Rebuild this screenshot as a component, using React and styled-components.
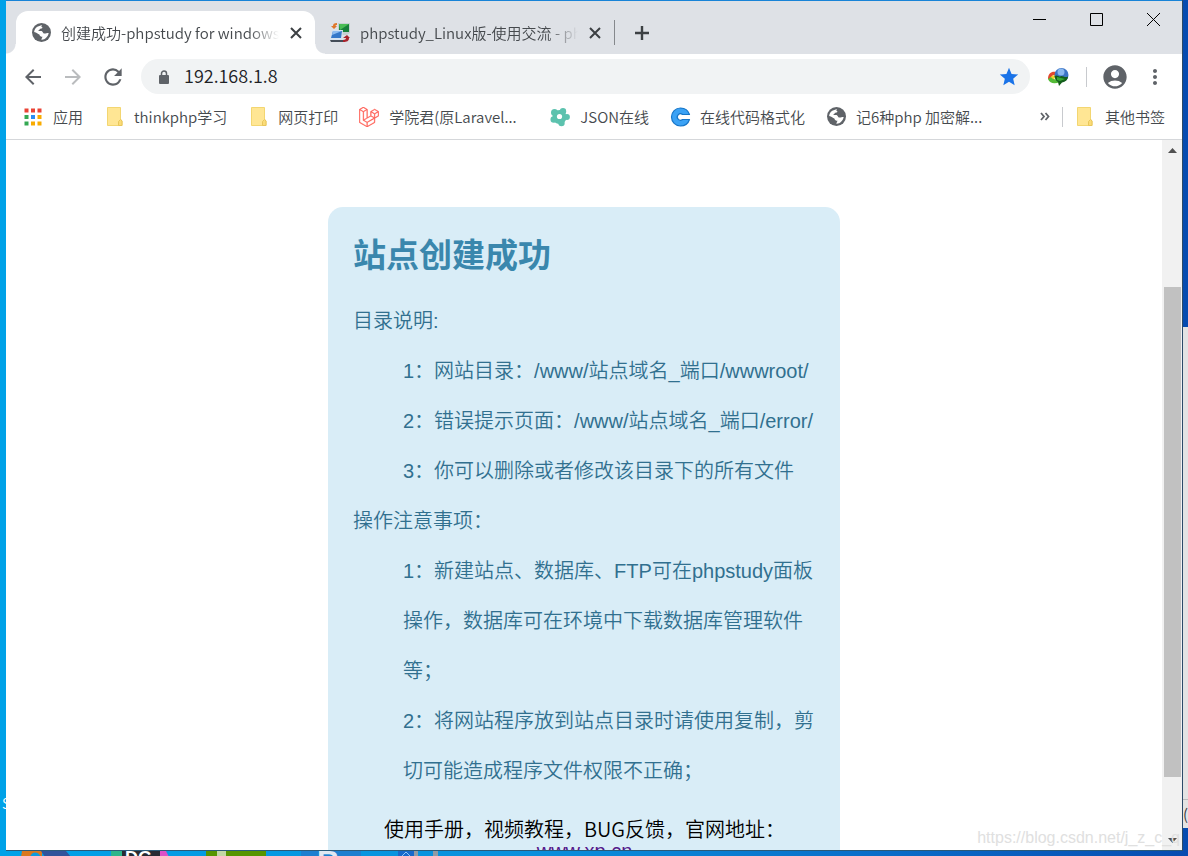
import React from 'react'
import styled, { createGlobalStyle, css } from 'styled-components'
import {
  MdArrowBack,
  MdArrowForward,
  MdMoreVert,
  MdRefresh,
  MdStar,
  MdAccountCircle,
} from 'react-icons/md'
import { SiLaravel } from 'react-icons/si'

const uiFont = "'Noto Sans CJK SC', sans-serif"
const pageFont = "'Liberation Sans', 'Noto Sans CJK SC', sans-serif"

const GlobalStyle = createGlobalStyle`
  * {
    box-sizing: border-box;
  }
  body {
    margin: 0;
    font-family: ${uiFont};
    font-weight: 350;
  }
  button {
    border: 0;
    padding: 0;
    background: none;
    font: inherit;
  }
  svg {
    display: block;
    flex: none;
  }
`

const Desktop = styled.div`
  position: relative;
  display: grid;
  grid-template-columns: 6px minmax(0, 1fr) 6px;
  grid-template-rows: minmax(0, 1fr) 5px;
  height: 100vh;
  overflow: hidden;
  background: linear-gradient(90deg, #00a2e8 0%, #0a8fdc 45%, #0a6cc8 75%, #064bb0 100%);
`

const LeftEdge = styled.div`
  display: flex;
  align-items: flex-end;
  padding: 0 0 38px 2px;
  overflow: hidden;
  color: #fff;
  font-size: 14px;
  line-height: 20px;
`

const RightEdge = styled.div`
  display: flex;
  flex-direction: column;
  border-left: 1px solid #2b4a68;
`

const EdgeWindow = styled.div`
  display: flex;
  flex-direction: column;
  justify-content: flex-end;
  flex: 500;
  overflow: hidden;
  background: #e3e3e3;
  color: #333;
  font-size: 15px;
  line-height: 28px;

  span {
    border-top: 1px solid #bbb;
  }
`

const EdgeSpace = styled.div`
  flex: ${(props) => props.$size};
`

const Taskbar = styled.div`
  grid-column: 1 / -1;
  overflow: hidden;
`

const Window = styled.div`
  display: flex;
  flex-direction: column;
  min-width: 0;
  border-top: 1px solid #1883d7;
  border-bottom: 1px solid #2b5a78;
  background: #fff;
`

const TabStrip = styled.div`
  display: flex;
  flex: none;
  height: 53px;
  padding: 10px 0 0 10px;
  background: #dee1e6;
`

const activeTab = css`
  background: #fff;

  &::before,
  &::after {
    content: '';
    position: absolute;
    bottom: 0;
    width: 10px;
    height: 10px;
  }
  &::before {
    left: -10px;
    background: radial-gradient(circle at 0 0, transparent 9px, #fff 10px);
  }
  &::after {
    right: -10px;
    background: radial-gradient(circle at 100% 0, transparent 9px, #fff 10px);
  }
`

const Tab = styled.div`
  position: relative;
  display: flex;
  align-items: center;
  gap: 10px;
  flex: 0 1 299px;
  min-width: 0;
  padding: 0 12px 0 15px;
  border-radius: 12px 12px 0 0;
  ${(props) => props.$active && activeTab}
`

const TabTitle = styled.span`
  flex: 1;
  min-width: 0;
  overflow: hidden;
  white-space: nowrap;
  color: #45494d;
  font-size: 15px;
  line-height: 22px;
  mask-image: linear-gradient(90deg, #000 calc(100% - 30px), transparent);
`

const TabDivider = styled.span`
  align-self: center;
  width: 1px;
  height: 25px;
  background: #85888c;
`

const NewTab = styled.button`
  display: grid;
  place-items: center;
  width: 54px;
`

const WindowControls = styled.div`
  display: flex;
  margin: -10px 0 0 auto;

  button {
    display: grid;
    place-items: center;
    width: 57px;
    height: 37px;
  }
`

const Toolbar = styled.div`
  display: flex;
  align-items: center;
  flex: none;
  height: 45px;
  padding: 0 7px;
`

const ToolButton = styled.button`
  display: grid;
  place-items: center;
  flex: none;
  width: 40px;
  height: 36px;
  color: ${(props) => (props.$muted ? '#babcbe' : '#5f6368')};
`

const AddressBar = styled.label`
  display: flex;
  align-items: center;
  gap: 10px;
  flex: 1;
  min-width: 0;
  height: 35px;
  margin: 0 8px;
  padding: 0 10px 0 13px;
  border-radius: 18px;
  background: #f1f3f4;
  color: #5f6368;
`

const AddressInput = styled.input`
  flex: 1;
  min-width: 0;
  padding: 0 0 3px;
  border: 0;
  outline: 0;
  background: none;
  color: #202124;
  font-family: ${uiFont};
  font-size: 18px;
  font-weight: 350;
`

const IconSlot = styled.span`
  display: grid;
  place-items: center;
  flex: none;
  width: 20px;
  height: 20px;
`

const Divider = styled.span`
  flex: none;
  width: 1px;
  height: 20px;
  margin: 0 ${(props) => props.$gap || 0}px;
  background: #c8cace;
`

const BookmarksBar = styled.nav`
  display: flex;
  align-items: center;
  gap: 21px;
  flex: none;
  height: 41px;
  padding: 0 17px 5px;
  border-bottom: 1px solid #d5d7da;
`

const BookmarkLink = styled.a`
  display: flex;
  align-items: center;
  gap: 10px;
  flex: none;
  color: #45494d;
  font-size: 15px;
  line-height: 22px;
  text-decoration: none;
  white-space: nowrap;
`

const BookmarkLabel = styled.span`
  min-width: ${(props) => (props.$full ? '140px' : '0')};
`

const BookmarkEnd = styled.div`
  display: flex;
  align-items: center;
  gap: 12px;
  margin-left: auto;
`

const Viewport = styled.div`
  display: flex;
  flex: 1;
  min-height: 0;
`

const Page = styled.main`
  flex: 1;
  min-width: 0;
  overflow: hidden;
  padding-top: 67px;
  font-family: ${pageFont};
  font-size: 20px;
`

const Card = styled.article`
  max-width: 512px;
  margin: 0 auto;
  padding: 26px 24px 60px 25px;
  border-radius: 15px;
  background: #d9edf7;
  color: #31708f;
`

const Heading = styled.h1`
  margin: 0 0 17px;
  color: #3a87ad;
  font-size: 33px;
  font-weight: 700;
  line-height: 46px;
`

const Paragraph = styled.p`
  margin: 0;
  line-height: 50px;
`

const Notes = styled.ul`
  margin: 0;
  padding: 0 0 0 50px;
  line-height: 50px;
  list-style: none;
`

const Contact = styled.p`
  margin: 22px 0 0;
  color: #000;
  font-family: ${uiFont};
  line-height: 22px;
  text-align: center;

  a {
    display: block;
    color: #551a8b;
    font-family: ${pageFont};
  }
`

const Scrollbar = styled.div`
  display: flex;
  flex-direction: column;
  flex: none;
  width: 20px;
  padding: 0 1px 0 2px;
  background: #f1f1f1;
`

const ScrollArrow = styled.button`
  display: grid;
  place-items: center;
  flex: none;
  height: 20px;
`

const ScrollSpace = styled.div`
  flex: ${(props) => props.$size};
`

const ScrollThumb = styled.div`
  flex: 490;
  background: #c1c1c1;
`

const Watermark = styled.span`
  position: absolute;
  right: 8px;
  bottom: 8px;
  color: #e0e0e0;
  font-family: ${pageFont};
  font-size: 16px;
  line-height: 20px;
`

const GlobeIcon = () => (
  <svg width="19" height="19" viewBox="0 0 18 18">
    <circle cx="9" cy="9" r="9" fill="#5f6368" />
    <path
      d="M2 8.5C2.200 6.500 3.200 4.700 5 3.500L9.500 2C8.500 3.300 8.700 4 10 4.200C9.500 5.200 8.500 5.300 7.500 5.500C7.300 6.500 6.500 7 5.700 7.500H8.500C10.500 7.500 10 10 12 10C13.200 10 14 9.500 15.800 9.500C15.300 12.800 12.700 15.700 9 16C9 14.800 9.500 14 10 13C8.500 13 7.200 12.500 7 10.800C5.500 10.600 4.500 8.600 2 8.500Z"
      fill="#fff"
    />
  </svg>
)

const ComputersIcon = () => (
  <svg width="20" height="20" viewBox="0 0 20 20">
    <path d="M8 0H20V10L17 12H8Z" fill="#c4d0d2" />
    <path d="M9 1H19V9H9Z" fill="#16803a" />
    <path d="M9 1H19L10 7Z" fill="#49bd55" />
    <path d="M2 7H13L12 17H0Z" fill="#d5e3f0" />
    <path d="M3 8H12L11 15H1Z" fill="#3478c9" />
    <path d="M3 8H12L2 12Z" fill="#8dbcf0" />
    <path d="M0 17H13L15 19H1Z" fill="#444d58" />
    <path d="M7 0C4 0 3 1 3 3H1L4 6L7 3H5.500C5.500 2 6 2 7 2Z" fill="#df762a" />
    <path d="M13 19C17 19 19 18 19 15H20L17 12L13 15H16C16 16 15 17 13 17Z" fill="#a8232c" />
  </svg>
)

const CloseIcon = () => (
  <svg width="14" height="14" viewBox="0 0 14 14">
    <path d="M2 2L12 12M12 2L2 12" stroke="#3c4043" strokeWidth="2" />
  </svg>
)

const PlusIcon = () => (
  <svg width="16" height="16" viewBox="0 0 16 16">
    <path d="M8 1V15M1 8H15" stroke="#3c4043" strokeWidth="2.400" />
  </svg>
)

const MinimizeIcon = () => (
  <svg width="13" height="13" viewBox="0 0 13 13">
    <path d="M0 6.500H13" stroke="#000" />
  </svg>
)

const MaximizeIcon = () => (
  <svg width="13" height="13" viewBox="0 0 13 13">
    <path d="M.5 .5H12.500V12.500H.5Z" fill="none" stroke="#000" />
  </svg>
)

const CloseWindowIcon = () => (
  <svg width="13" height="13" viewBox="0 0 13 13">
    <path d="M0 0L13 13M13 0L0 13" stroke="#000" />
  </svg>
)

const LockIcon = () => (
  <svg width="12" height="14" viewBox="0 0 12 14">
    <rect x="1" y="5" width="10" height="9" rx="1" fill="#5f6368" />
    <path d="M3.500 5.500V3.500A2.500 2.500 0 0 1 8.500 3.500V5.500" fill="none" stroke="#5f6368" strokeWidth="1.500" />
  </svg>
)

const DownloaderIcon = () => (
  <svg width="22" height="20" viewBox="0 0 22 20">
    <path d="M1 12C1 6 5 4 9 5L8 8C5 8 4 10 5 13Z" fill="#e2492e" />
    <path d="M3 13C3 9 6 8 9 8L10 10C7 10 7 12 8 14Z" fill="#f4d32c" />
    <path d="M1 12C3 17 8 17 13 15L11 12C8 13 5 12 4 10Z" fill="#54bb37" />
    <circle cx="14.500" cy="8" r="7" fill="#3c73c4" />
    <circle cx="14" cy="5" r="3.500" fill="#8ab8ef" />
    <path d="M7.500 9C11 7 12 11 14 9C17 9 18 11 21 9.500C21 13 18 15 15 15.500L12 19L11 15C9 14 8 12 7.500 9Z" fill="#145f1b" />
    <path d="M10 10L14 11L18 12L13 14L10 13Z" fill="#37a832" />
  </svg>
)

const appColors = [
  '#ea4335', '#ea4335', '#ea4335',
  '#34a853', '#2a8cf4', '#f9ab00',
  '#34a853', '#f9ab00', '#f9ab00',
]

const AppsIcon = () => (
  <svg width="18" height="18" viewBox="0 0 18 18">
    {appColors.map((color, i) => (
      <rect
        key={i}
        x={(i % 3) * 6.5 + 0.5}
        y={Math.floor(i / 3) * 6.5 + 0.5}
        width="4"
        height="4"
        fill={color}
      />
    ))}
  </svg>
)

const FolderIcon = () => (
  <svg width="17" height="19" viewBox="0 0 17 19">
    <path d="M1.500 .5H14.500V12L16 14V18.500H1.500Z" fill="#ffe694" stroke="#f3d671" />
    <path d="M12.500 18.500V14.500L14.500 12.500L16 14V18.500Z" fill="#fbdc78" stroke="#e8c65c" />
  </svg>
)

const FlowerIcon = () => (
  <svg width="20" height="20" viewBox="0 0 20 20">
    <g fill="#5cc2ae">
      <circle cx="9.500" cy="10" r="7" />
      <circle cx="13" cy="4.200" r="3.200" />
      <circle cx="4.500" cy="5.500" r="3.500" />
      <circle cx="3.800" cy="12.500" r="3.300" />
      <circle cx="11.500" cy="16" r="3.200" />
      <circle cx="17" cy="10" r="2.900" />
    </g>
    <circle cx="9.500" cy="9.500" r="2.600" fill="#fff" />
  </svg>
)

const CodeIcon = () => (
  <svg width="21" height="20" viewBox="0 0 21 20">
    <path
      d="M19.500 7.500H12.500A3.200 3.200 0 1 0 12.500 12.500H19.500C18 17 14.500 19 10.500 19A9 9 0 1 1 10.500 1C14.500 1 18 3 19.500 7.500Z"
      fill="#3ba2f5"
      stroke="#1675c8"
      strokeWidth="1.200"
      strokeLinejoin="round"
    />
  </svg>
)

const TriangleIcon = ({ down }) => (
  <svg width="9" height="5" viewBox="0 0 9 5">
    <path d={down ? 'M0 0H9L4.500 5Z' : 'M0 5H9L4.500 0Z'} fill="#505050" />
  </svg>
)

// tops of the desktop shortcuts that peek out under the window
const ShortcutsArt = () => (
  <svg width="450" height="6" viewBox="0 0 450 6">
    <path d="M21 6L22 0H42V6Z" fill="#d9781e" />
    <path d="M30 6C32 0 38 0 41 6Z" fill="#0a9be0" />
    <path d="M41 0H66L71 6H45Z" fill="#30549b" />
    <path d="M111 0H123V6H111Z" fill="#2bb58a" />
    <path d="M122 0H160V6H122Z" fill="#292b33" />
    <path d="M160 0H166L169 6H160Z" fill="#dc50c8" />
    <text x="125" y="13" fill="#fff" fontSize="18" fontWeight="700" fontFamily="Liberation Sans, sans-serif">DG</text>
    <path d="M206 0H266V6H206Z" fill="#579500" />
    <path d="M217 0H226V6H217Z" fill="#c2d8a4" />
    <path d="M301 0H361V6H301Z" fill="#1c7fd0" />
    <text x="317" y="20" fill="#dfe8f2" fontSize="30" fontWeight="700" fontFamily="Liberation Sans, sans-serif">R</text>
    <path d="M398 0H414V6H398Z" fill="#1769cb" />
    <path d="M401 6L406 1L411 6" stroke="#8fc4f4" fill="none" />
    <path d="M414 0H418V6H414ZM433 0H438V6H433Z" fill="#909ba5" />
  </svg>
)

const bookmarks = [
  { label: '应用', icon: <AppsIcon /> },
  { label: 'thinkphp学习', icon: <FolderIcon /> },
  { label: '网页打印', icon: <FolderIcon /> },
  {
    label: '学院君(原Laravel...',
    icon: <SiLaravel size={20} color="#ff5a4f" stroke="#ff5a4f" strokeWidth={0.5} />,
    full: true,
  },
  { label: 'JSON在线', icon: <FlowerIcon /> },
  { label: '在线代码格式化', icon: <CodeIcon /> },
  { label: '记6种php 加密解...', icon: <GlobeIcon /> },
]

const Bookmark = ({ label, icon, full }) => (
  <BookmarkLink href="#">
    <IconSlot>{icon}</IconSlot>
    <BookmarkLabel $full={full}>{label}</BookmarkLabel>
  </BookmarkLink>
)

const App = () => {
  return (
    <Desktop>
      <GlobalStyle />
      <LeftEdge>S</LeftEdge>
      <Window>
        <TabStrip>
          <Tab $active>
            <IconSlot>
              <GlobeIcon />
            </IconSlot>
            <TabTitle>创建成功-phpstudy for windows</TabTitle>
            <button aria-label="Close tab">
              <CloseIcon />
            </button>
          </Tab>
          <Tab>
            <IconSlot>
              <ComputersIcon />
            </IconSlot>
            <TabTitle>phpstudy_Linux版-使用交流 - php</TabTitle>
            <button aria-label="Close tab">
              <CloseIcon />
            </button>
          </Tab>
          <TabDivider />
          <NewTab aria-label="New tab">
            <PlusIcon />
          </NewTab>
          <WindowControls>
            <button aria-label="Minimize">
              <MinimizeIcon />
            </button>
            <button aria-label="Maximize">
              <MaximizeIcon />
            </button>
            <button aria-label="Close">
              <CloseWindowIcon />
            </button>
          </WindowControls>
        </TabStrip>
        <Toolbar>
          <ToolButton aria-label="Back">
            <MdArrowBack size={24} />
          </ToolButton>
          <ToolButton aria-label="Forward" $muted>
            <MdArrowForward size={24} />
          </ToolButton>
          <ToolButton aria-label="Reload">
            <MdRefresh size={26} />
          </ToolButton>
          <AddressBar>
            <IconSlot>
              <LockIcon />
            </IconSlot>
            <AddressInput aria-label="Address" defaultValue="192.168.1.8" />
            <MdStar size={22} color="#1a73e8" />
          </AddressBar>
          <ToolButton aria-label="Downloader">
            <DownloaderIcon />
          </ToolButton>
          <Divider $gap={8} />
          <ToolButton aria-label="Profile">
            <MdAccountCircle size={28} />
          </ToolButton>
          <ToolButton aria-label="Menu">
            <MdMoreVert size={24} />
          </ToolButton>
        </Toolbar>
        <BookmarksBar>
          {bookmarks.map((item) => (
            <Bookmark key={item.label} {...item} />
          ))}
          <BookmarkEnd>
            <button aria-label="More bookmarks">
              <svg width="10" height="9" viewBox="0 0 10 9">
                <path
                  d="M1 1L4 4.500L1 8M5.500 1L8.500 4.500L5.500 8"
                  fill="none"
                  stroke="#5f6368"
                  strokeWidth="1.800"
                />
              </svg>
            </button>
            <Divider />
            <Bookmark label="其他书签" icon={<FolderIcon />} />
          </BookmarkEnd>
        </BookmarksBar>
        <Viewport>
          <Page>
            <Card>
              <Heading>站点创建成功</Heading>
              <Paragraph>目录说明:</Paragraph>
              <Notes>
                <li>1：网站目录：/www/站点域名_端口/wwwroot/</li>
                <li>2：错误提示页面：/www/站点域名_端口/error/</li>
                <li>3：你可以删除或者修改该目录下的所有文件</li>
              </Notes>
              <Paragraph>操作注意事项：</Paragraph>
              <Notes>
                <li>1：新建站点、数据库、FTP可在phpstudy面板操作，数据库可在环境中下载数据库管理软件等；</li>
                <li>2：将网站程序放到站点目录时请使用复制，剪切可能造成程序文件权限不正确；</li>
              </Notes>
              <Contact>
                使用手册，视频教程，BUG反馈，官网地址：
                <a href="#">www.xp.cn</a>
              </Contact>
            </Card>
          </Page>
          <Scrollbar>
            <ScrollArrow aria-label="Scroll up">
              <TriangleIcon />
            </ScrollArrow>
            <ScrollSpace $size={127} />
            <ScrollThumb />
            <ScrollSpace $size={53} />
            <ScrollArrow aria-label="Scroll down">
              <TriangleIcon down />
            </ScrollArrow>
          </Scrollbar>
        </Viewport>
      </Window>
      <RightEdge>
        <EdgeSpace $size={327} />
        <EdgeWindow>
          <span>(</span>
        </EdgeWindow>
        <EdgeSpace $size={23} />
      </RightEdge>
      <Taskbar>
        <ShortcutsArt />
      </Taskbar>
      <Watermark>https://blog.csdn.net/j_z_c_q</Watermark>
    </Desktop>
  )
}

export default App
